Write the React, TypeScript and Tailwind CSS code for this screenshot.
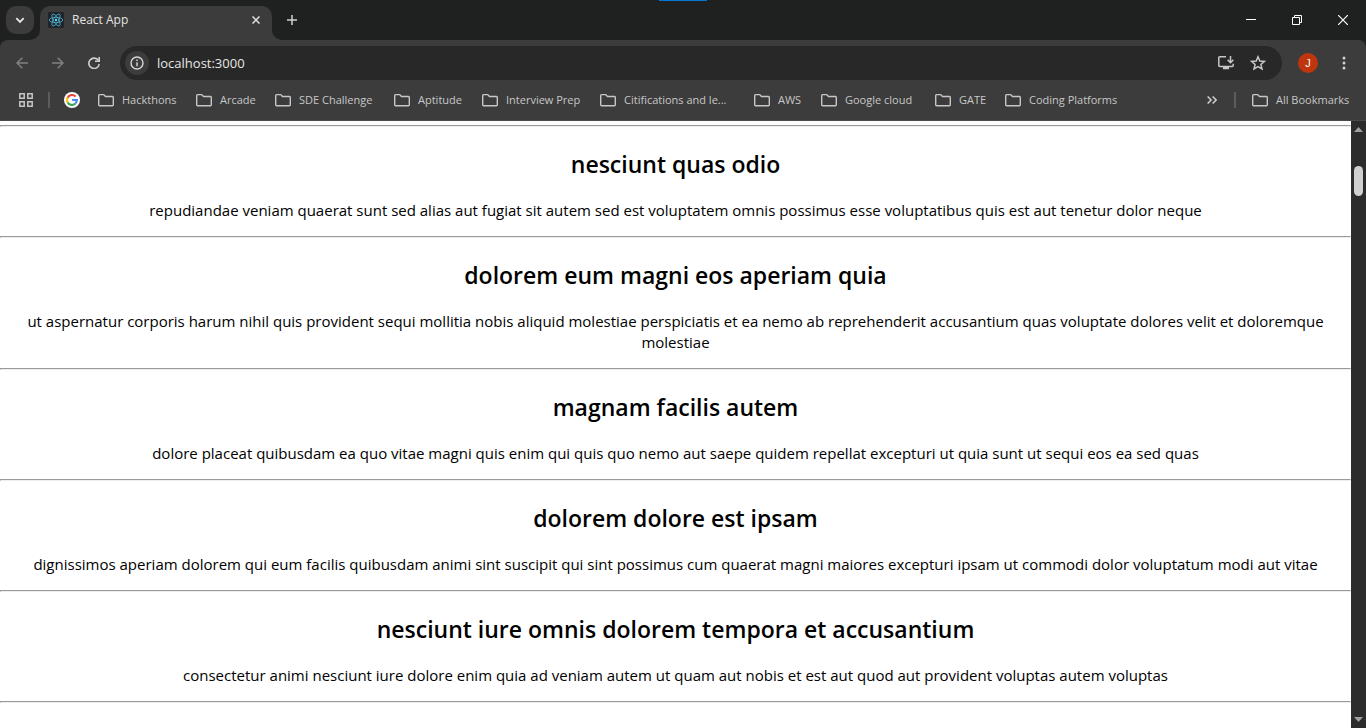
import type { ReactNode } from "react";

const posts = [
  {
    title: "nesciunt quas odio",
    body: "repudiandae veniam quaerat sunt sed alias aut fugiat sit autem sed est voluptatem omnis possimus esse voluptatibus quis est aut tenetur dolor neque",
  },
  {
    title: "dolorem eum magni eos aperiam quia",
    body: "ut aspernatur corporis harum nihil quis provident sequi mollitia nobis aliquid molestiae perspiciatis et ea nemo ab reprehenderit accusantium quas voluptate dolores velit et doloremque molestiae",
  },
  {
    title: "magnam facilis autem",
    body: "dolore placeat quibusdam ea quo vitae magni quis enim qui quis quo nemo aut saepe quidem repellat excepturi ut quia sunt ut sequi eos ea sed quas",
  },
  {
    title: "dolorem dolore est ipsam",
    body: "dignissimos aperiam dolorem qui eum facilis quibusdam animi sint suscipit qui sint possimus cum quaerat magni maiores excepturi ipsam ut commodi dolor voluptatum modi aut vitae",
  },
  {
    title: "nesciunt iure omnis dolorem tempora et accusantium",
    body: "consectetur animi nesciunt iure dolore enim quia ad veniam autem ut quam aut nobis et est aut quod aut provident voluptas autem voluptas",
  },
];

const bookmarks = [
  { name: "Hackthons", width: "w-20" },
  { name: "Arcade", width: "w-[61px]" },
  { name: "SDE Challenge", width: "w-[101px]" },
  { name: "Aptitude", width: "w-[70px]" },
  { name: "Interview Prep", width: "w-[100px]" },
  { name: "Citifications and le...", width: "w-[136px]" },
  { name: "AWS", width: "w-[49px]" },
  { name: "Google cloud", width: "w-24" },
  { name: "GATE", width: "w-[52px]" },
  { name: "Coding Platforms", width: "w-[116px]" },
];

function IconButton({ label, className, children }: { label: string; className: string; children: ReactNode }) {
  return (
    <button type="button" aria-label={label} className={`flex shrink-0 items-center justify-center ${className}`}>
      {children}
    </button>
  );
}

function FolderIcon() {
  return (
    <svg width="16" height="16" viewBox="0 0 16 16" fill="none" stroke="#c7c7c7" strokeWidth="1.4" className="shrink-0">
      <path d="M.7 12.800V3.400a.8.8 0 0 1 .8-.8h4.200l1.800 1.900h7a.8.8 0 0 1 .8.8v7.500a.9.9 0 0 1-.9.900H1.600a.9.9 0 0 1-.9-.900Z" />
    </svg>
  );
}

function ReactLogo() {
  return (
    <svg width="16" height="16" viewBox="0 0 16 16" className="shrink-0">
      <rect width="16" height="16" rx="1" fill="#20232a" />
      <g fill="none" stroke="#4fb3cf" strokeWidth=".8">
        <ellipse cx="8" cy="8" rx="6.8" ry="2.6" />
        <ellipse cx="8" cy="8" rx="6.8" ry="2.6" transform="rotate(60 8 8)" />
        <ellipse cx="8" cy="8" rx="6.8" ry="2.6" transform="rotate(120 8 8)" />
      </g>
      <circle cx="8" cy="8" r="1.2" fill="#61dafb" />
    </svg>
  );
}

function GoogleLogo() {
  return (
    <svg width="16" height="16" viewBox="0 0 16 16">
      <circle cx="8" cy="8" r="8" fill="#fff" />
      <g fill="none" strokeWidth="2.1">
        <path d="M11.600 4.500A5 5 0 0 0 3.600 5.700" stroke="#ea4335" />
        <path d="M3.600 5.700a5 5 0 0 0 0 4.700" stroke="#fbbc05" />
        <path d="M3.600 10.400a5 5 0 0 0 7.800 1.200" stroke="#34a853" />
        <path d="M11.400 11.600A4.800 4.800 0 0 0 12.900 8H8.100" stroke="#4285f4" />
      </g>
    </svg>
  );
}

function TabStrip() {
  return (
    <header className="relative flex h-10 shrink-0 items-start bg-[#1f2120]">
      <div className="absolute left-1/2 top-0 h-px w-12 -translate-x-1/2 bg-[#0078d7]" />
      <IconButton label="Search tabs" className="ml-1.5 mt-1.5 h-7 w-7 rounded-[10px] bg-[#3c3c3c]">
        <svg width="10" height="10" viewBox="0 0 10 10" fill="none" stroke="#e8e8e8" strokeWidth="1.8">
          <path d="m1.300 3.200 3.700 3.700 3.700-3.700" />
        </svg>
      </IconButton>
      <div className="relative ml-1.5 mt-1.5 flex h-[34px] w-[232px] items-center rounded-t-[10px] bg-[#3c3c3c] pb-1.5 pl-2 pr-2">
        <svg width="10" height="10" className="absolute -left-2.5 bottom-0" fill="#3c3c3c">
          <path d="M10 0v10H0A10 10 0 0 0 10 0Z" />
        </svg>
        <svg width="10" height="10" className="absolute -right-2.5 bottom-0" fill="#3c3c3c">
          <path d="M0 0v10h10A10 10 0 0 1 0 0Z" />
        </svg>
        <ReactLogo />
        <span className="ml-2 flex-1 text-[12px] leading-4 text-[#e3e3e3]">React App</span>
        <IconButton label="Close tab" className="h-4 w-4">
          <svg width="8" height="8" viewBox="0 0 8 8" stroke="#e3e3e3" strokeWidth="1.5">
            <path d="m.5.5 7 7m0-7-7 7" />
          </svg>
        </IconButton>
      </div>
      <IconButton label="New tab" className="ml-1.5 mt-1.5 h-7 w-7">
        <svg width="10" height="10" viewBox="0 0 10 10" stroke="#d0d0d0" strokeWidth="1.5">
          <path d="M5 0v10M0 5h10" />
        </svg>
      </IconButton>
      <div className="ml-auto flex h-10">
        <IconButton label="Minimize" className="w-[46px]">
          <svg width="10" height="10" stroke="#fff">
            <path d="M0 4.500h10" />
          </svg>
        </IconButton>
        <IconButton label="Restore" className="w-[46px]">
          <svg width="10" height="10" fill="none" stroke="#fff">
            <path d="M.5 2.500h7v7h-7zM2.500 2.500v-2h7v7h-2" />
          </svg>
        </IconButton>
        <IconButton label="Close" className="w-[46px]">
          <svg width="10" height="10" stroke="#fff" strokeWidth="1.2">
            <path d="m0 0 10 10M10 0 0 10" />
          </svg>
        </IconButton>
      </div>
    </header>
  );
}

function Toolbar() {
  return (
    <div className="flex h-[46px] shrink-0 items-center rounded-t-lg bg-[#3c3c3c] pl-2 pr-2">
      <div className="flex gap-2">
        <IconButton label="Back" className="h-7 w-7">
          <svg width="12" height="12" viewBox="0 0 12 12" fill="none" stroke="#818181" strokeWidth="1.5">
            <path d="M12 6H1M6.300.700 1 6l5.300 5.300" />
          </svg>
        </IconButton>
        <IconButton label="Forward" className="h-7 w-7">
          <svg width="12" height="12" viewBox="0 0 12 12" fill="none" stroke="#818181" strokeWidth="1.5">
            <path d="M0 6h11M5.700.700 11 6l-5.300 5.300" />
          </svg>
        </IconButton>
        <IconButton label="Reload" className="h-7 w-7">
          <svg width="12" height="12" viewBox="0 0 12 12" fill="none" stroke="#d0d0d0" strokeWidth="1.6">
            <path d="M10.400 3.500A5.200 5.200 0 1 0 11.200 7" />
            <path d="M11.200 0v4.300H7" />
          </svg>
        </IconButton>
      </div>
      <div className="ml-3 flex h-[34px] flex-1 items-center rounded-full bg-[#282828] pl-[5px] pr-2.5">
        <IconButton label="View site information" className="h-6 w-6 rounded-full bg-[#3c3c3c]">
          <svg width="14" height="14" viewBox="0 0 14 14" fill="none" stroke="#d6d6d6" strokeWidth="1.4">
            <circle cx="7" cy="7" r="6" />
            <path d="M7 6.200v4M7 3.600V5" />
          </svg>
        </IconButton>
        <input
          aria-label="Address"
          defaultValue="localhost:3000"
          className="ml-2 h-6 min-w-0 flex-1 bg-transparent text-[13px] text-[#e6e6e6] outline-none"
        />
        <IconButton label="Install app" className="h-7 w-7">
          <svg width="18" height="16" viewBox="0 0 18 16" fill="none" stroke="#c7c7c7" strokeWidth="1.5">
            <path d="M9 1.700H2.700a.9.9 0 0 0-.9.900v8a.9.9 0 0 0 .9.900h12.600a.9.9 0 0 0 .9-.900V8.800" />
            <path d="M13.500 1v6.500M10.700 4.900l2.800 2.800 2.800-2.800" />
            <path d="M6 13h6" strokeWidth="2.5" />
          </svg>
        </IconButton>
        <IconButton label="Bookmark this tab" className="ml-1 h-7 w-7">
          <svg width="16" height="16" viewBox="0 0 16 16" fill="none" stroke="#c7c7c7" strokeWidth="1.5">
            <path d="m8 1.800 1.800 4.200 4.600.4-3.500 3 1.100 4.500L8 11.500l-4 2.400 1.100-4.500-3.500-3 4.600-.4L8 1.800Z" />
          </svg>
        </IconButton>
      </div>
      <IconButton label="Profile" className="ml-4 h-5 w-5 rounded-full bg-[#bf360c] font-['Liberation_Sans',sans-serif] text-[11px] text-white">
        J
      </IconButton>
      <IconButton label="Chrome menu" className="ml-3 h-7 w-7">
        <svg width="4" height="14" fill="#d0d0d0">
          <circle cx="2" cy="2" r="1.5" />
          <circle cx="2" cy="7" r="1.5" />
          <circle cx="2" cy="12" r="1.5" />
        </svg>
      </IconButton>
    </div>
  );
}

function Bookmark({ name, width }: { name: string; width: string }) {
  return (
    <a href="#" className={`flex shrink-0 items-center gap-2 whitespace-nowrap ${width}`}>
      <FolderIcon />
      {name}
    </a>
  );
}

function BookmarksBar() {
  return (
    <nav className="flex h-[35px] shrink-0 items-center border-b border-[#4a4a4a] bg-[#3c3c3c] pb-1.5 pl-[18px] pr-3.5 text-[11px] leading-4 text-[#c7c7c7]">
      <IconButton label="Apps" className="h-4 w-4">
        <svg width="14" height="14" fill="none" stroke="#c7c7c7" strokeWidth="1.5">
          <path d="M.8.800h4.400v4.400H.800zM8.800.800h4.400v4.400H8.800zM.8 8.800h4.400v4.400H.800zM8.800 8.800h4.400v4.400H8.800z" />
        </svg>
      </IconButton>
      <span className="ml-3.5 h-4 w-0.5 bg-[#5c5c5c]" />
      <a href="#" aria-label="Google" className="ml-3.5">
        <GoogleLogo />
      </a>
      <div className="ml-[18px] flex min-w-0 flex-1 gap-[18px] overflow-hidden">
        {bookmarks.map(({ name, width }) => (
          <Bookmark key={name} name={name} width={width} />
        ))}
      </div>
      <IconButton label="More bookmarks" className="h-4 w-4">
        <svg width="10" height="8" fill="none" stroke="#d0d0d0" strokeWidth="1.5">
          <path d="m.6.500 3.500 3.500L.6 7.500M5.600.500 9.100 4 5.600 7.500" />
        </svg>
      </IconButton>
      <span className="ml-3.5 mr-4 h-4 w-0.5 bg-[#5c5c5c]" />
      <Bookmark name="All Bookmarks" width="w-[100px]" />
    </nav>
  );
}

function Scrollbar() {
  return (
    <div className="flex w-[15px] shrink-0 flex-col items-center bg-[#2c2c2c] py-1.5">
      <svg width="9" height="5" fill="#9f9f9f">
        <path d="M0 5 4.500 0 9 5Z" />
      </svg>
      <div className="mt-[34px] h-[30px] w-[9px] rounded-full bg-[#d0d0d0]" />
      <svg width="9" height="5" fill="#9f9f9f" className="mt-auto">
        <path d="M0 0h9L4.500 5Z" />
      </svg>
    </div>
  );
}

function Rule() {
  return <hr className="h-0.5 border border-[#eeeeee] border-l-[#9a9a9a] border-t-[#9a9a9a]" />;
}

export default function App() {
  return (
    <div className="flex h-screen flex-col overflow-hidden bg-[#1f2120] font-['Segoe_UI','Open_Sans',sans-serif]">
      <TabStrip />
      <Toolbar />
      <BookmarksBar />
      <div className="flex min-h-0 flex-1">
        <main className="min-w-0 flex-1 overflow-hidden bg-white pt-1 text-center text-black">
          <Rule />
          {posts.map((post) => (
            <article key={post.title}>
              <h2 className="mt-[21px] text-[23px] font-semibold leading-8">{post.title}</h2>
              <p className="mb-[15px] mt-5 text-[15px] leading-[21px]">{post.body}</p>
              <Rule />
            </article>
          ))}
        </main>
        <Scrollbar />
      </div>
    </div>
  );
}
